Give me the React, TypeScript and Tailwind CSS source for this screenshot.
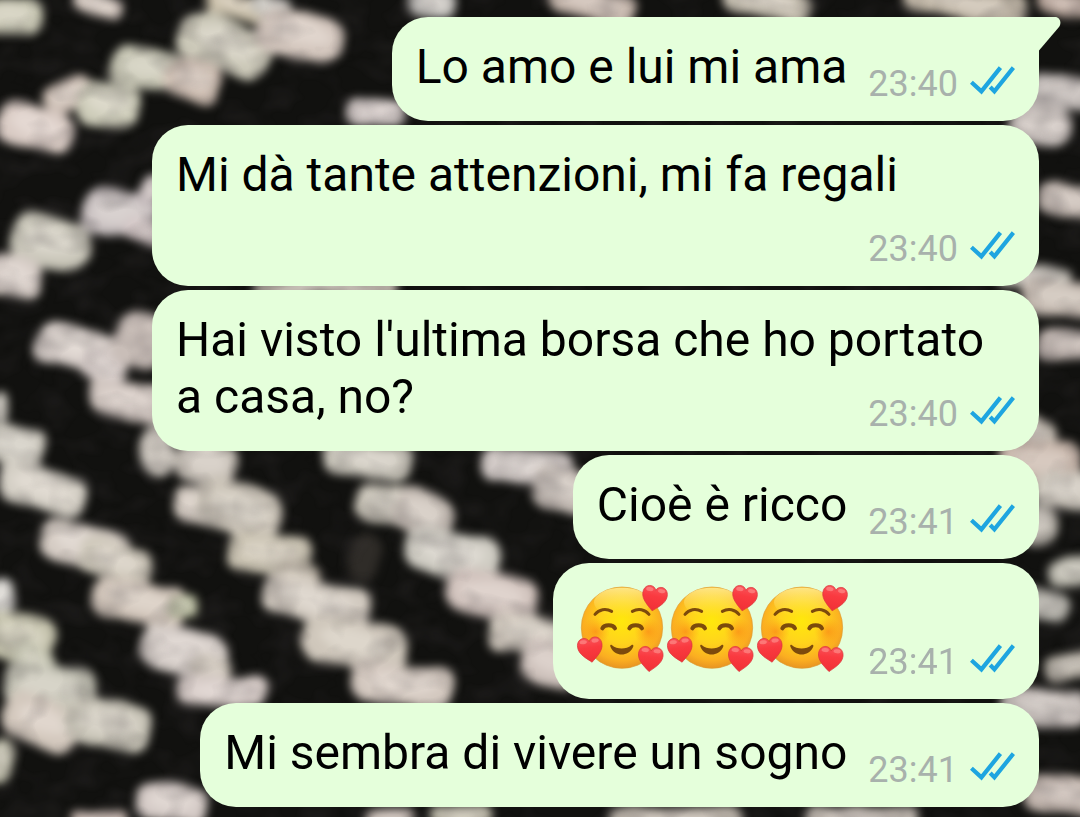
import React from 'react';

interface Message {
  id: number;
  text?: string;
  emojis?: number;
  time: string;
}

const messages: Message[] = [
  { id: 1, text: 'Lo amo e lui mi ama', time: '23:40' },
  { id: 2, text: 'Mi dà tante attenzioni, mi fa regali', time: '23:40' },
  { id: 3, text: "Hai visto l'ultima borsa che ho portato a casa, no?", time: '23:40' },
  { id: 4, text: 'Cioè è ricco', time: '23:41' },
  { id: 5, emojis: 3, time: '23:41' },
  { id: 6, text: 'Mi sembra di vivere un sogno', time: '23:41' },
];

// Light tufts of the woven wallpaper: cx, cy, rx, ry, rotation, color
type Tuft = [number, number, number, number, number, string];

const tufts: Tuft[] = [
  [12, 16, 30, 18, 0, '#c9c8b4'],
  [97, 5, 24, 12, 15, '#d0c4bc'],
  [235, 6, 30, 13, 15, '#c9bfa9'],
  [270, 6, 20, 13, 20, '#c5c2bc'],
  [225, 46, 46, 25, 24, '#cbc8b8'],
  [299, 35, 44, 22, 10, '#d3c6bd'],
  [148, 69, 38, 21, 5, '#c8c7b5'],
  [193, 80, 26, 20, 22, '#cfbfb3'],
  [68, 94, 26, 14, -28, '#cbbdb3'],
  [108, 104, 30, 21, 8, '#cdccb9'],
  [35, 128, 38, 21, 10, '#d9cbc4'],
  [376, 113, 30, 13, 5, '#d4cbc9'],
  [120, 214, 40, 22, 8, '#c8c0c0'],
  [150, 190, 12, 16, 20, '#c4babb'],
  [146, 232, 20, 12, 15, '#d1c4c4'],
  [50, 243, 41, 24, 8, '#c9c6b9'],
  [14, 276, 28, 21, 8, '#d5cbc5'],
  [76, 348, 40, 19, 14, '#d9d0cb'],
  [105, 366, 24, 15, 22, '#d0c6c3'],
  [140, 340, 28, 26, 20, '#c9beb8'],
  [128, 400, 40, 20, 12, '#d1c6c0'],
  [0, 408, 8, 18, 0, '#c3c0b7'],
  [14, 446, 30, 19, 14, '#cbc7bd'],
  [44, 488, 46, 22, 18, '#d4cfc5'],
  [158, 452, 16, 26, -10, '#cac4bc'],
  [206, 462, 30, 24, 20, '#c9c2b9'],
  [198, 506, 24, 18, 5, '#d1c8bf'],
  [238, 509, 42, 24, 22, '#cbc4b8'],
  [85, 546, 44, 20, 12, '#d5ccc4'],
  [115, 560, 36, 18, 18, '#cec8ba'],
  [138, 602, 46, 21, 10, '#d0c4b9'],
  [182, 606, 15, 10, 0, '#b9bd9f'],
  [0, 596, 14, 17, 0, '#d5d3cf'],
  [183, 650, 42, 24, 10, '#d4ccc7'],
  [210, 668, 18, 12, 20, '#c7bfb4'],
  [222, 691, 44, 16, 2, '#d6cbc7'],
  [18, 638, 36, 24, 15, '#c5c3ad'],
  [36, 660, 22, 14, 40, '#c4c4b1'],
  [50, 688, 46, 23, 8, '#c6c5b7'],
  [42, 722, 40, 24, 24, '#d3c8bd'],
  [108, 724, 44, 23, 14, '#c9c5b8'],
  [0, 760, 14, 22, 10, '#c2c0ad'],
  [172, 804, 36, 19, 8, '#d3c9c5'],
  [100, 820, 28, 11, 0, '#c4b4ad'],
  [368, 459, 46, 18, 8, '#ccc8bd'],
  [387, 503, 32, 18, 4, '#c9c4b8'],
  [424, 513, 31, 21, 26, '#c9c0b8'],
  [365, 556, 16, 26, 20, '#2f2c28'],
  [270, 554, 42, 20, 6, '#cac3b2'],
  [300, 576, 22, 14, 20, '#c2b9aa'],
  [316, 601, 54, 21, 12, '#d2cac0'],
  [354, 644, 52, 24, 12, '#cfc7bb'],
  [402, 684, 50, 21, 8, '#d3c8bf'],
  [452, 554, 48, 23, 10, '#cfccc3'],
  [492, 595, 47, 22, 14, '#d1c3bd'],
  [534, 636, 46, 19, 6, '#d2cabf'],
  [550, 664, 30, 24, 10, '#cdc1bb'],
  [528, 466, 46, 17, 4, '#cfc7c4'],
  [562, 490, 30, 22, 14, '#c9c0b9'],
  [325, 288, 72, 10, 0, '#b8b0a6'],
  [432, 3, 24, 13, 5, '#c4c2be'],
  [592, 4, 44, 16, 14, '#c6b7ad'],
  [768, 4, 44, 16, 12, '#c8c1b2'],
  [964, 2, 62, 16, 10, '#c3b9a9'],
  [1064, 3, 28, 12, 8, '#baa79c'],
  [1062, 92, 34, 17, 5, '#bfb8b5'],
  [1040, 124, 30, 20, 10, '#cac2be'],
  [1068, 199, 30, 16, 3, '#c4b9b2'],
  [1034, 277, 36, 12, 5, '#bfbbb3'],
  [1060, 298, 40, 17, 5, '#c5bab1'],
  [1068, 345, 30, 15, 5, '#bdb2ad'],
  [1030, 436, 28, 19, 20, '#c0b8ae'],
  [1040, 462, 42, 22, 8, '#c6b5aa'],
  [1066, 490, 34, 17, 5, '#c9c3b9'],
  [1038, 524, 20, 20, 0, '#b9b4ab'],
  [1072, 572, 24, 13, -8, '#b8b6ab'],
  [1046, 606, 24, 15, 10, '#b7b5ad'],
  [1072, 666, 28, 13, -12, '#b2aca2'],
  [1044, 708, 44, 18, 5, '#c8c0bc'],
  [1064, 795, 40, 19, 6, '#c5b8b0'],
  [390, 820, 26, 11, 0, '#c0b5ae'],
  [462, 816, 30, 11, 0, '#c3bfae'],
  [676, 820, 66, 14, 0, '#bdb5ab'],
  [862, 820, 54, 13, 0, '#bcb4ac'],
];

const Wallpaper: React.FC = () => (
  <svg
    className="absolute inset-0 -z-10 h-full w-full"
    viewBox="0 0 1080 817"
    preserveAspectRatio="xMidYMid slice"
    aria-hidden="true"
  >
    <defs>
      <filter
        id="weave"
        x="-40"
        y="-40"
        width="1160"
        height="897"
        filterUnits="userSpaceOnUse"
        colorInterpolationFilters="sRGB"
      >
        <feTurbulence type="fractalNoise" baseFrequency="0.02" numOctaves="2" seed="4" result="noise" />
        <feDisplacementMap in="SourceGraphic" in2="noise" scale="12" xChannelSelector="R" yChannelSelector="G" />
        <feGaussianBlur stdDeviation="4.6" />
      </filter>
      <filter
        id="grain"
        x="0"
        y="0"
        width="1080"
        height="817"
        filterUnits="userSpaceOnUse"
        colorInterpolationFilters="sRGB"
      >
        <feTurbulence type="fractalNoise" baseFrequency="0.03 0.04" numOctaves="2" seed="9" />
        <feColorMatrix values="0 0 0 0 0.25  0 0 0 0 0.23  0 0 0 0 0.24  2.4 0 0 0 -1" />
      </filter>
    </defs>
    <rect width="1080" height="817" fill="#11110f" />
    <g filter="url(#weave)">
      {tufts.map(([cx, cy, rx, ry, rot, fill], index) => (
        <g key={index} transform={`rotate(${rot} ${cx} ${cy})`}>
          <rect x={cx - rx} y={cy - ry} width={rx * 2} height={ry * 2} rx={ry * 0.75} fill={fill} />
          <ellipse cx={cx} cy={cy - ry * 0.1} rx={rx * 0.7} ry={ry * 0.55} fill="#fffaf2" opacity={ry > 25 ? 0 : 0.3} />
        </g>
      ))}
    </g>
    <rect width="1080" height="817" filter="url(#grain)" opacity="0.22" />
  </svg>
);

const DoubleCheck: React.FC = () => (
  <svg className="mb-2 h-[29px] w-[45px]" viewBox="0 0 45 29" fill="none" role="img" aria-label="Letto">
    <g stroke="#1ea5e0" strokeWidth="4.2" strokeLinejoin="miter">
      <path d="M1.4 16.2 11.4 25.4 30.4 1.6" />
      <path d="M20.2 21 24.4 25.4 43.4 1.6" />
    </g>
  </svg>
);

const Heart: React.FC<{ x: number; y: number; rotate: number }> = ({ x, y, rotate }) => (
  <g transform={`translate(${x} ${y}) rotate(${rotate})`}>
    <path
      d="M0 38C-12 27-37 10-37-12C-37-28-27-36-17-36C-8-36-2-31 0-24C2-31 8-36 17-36C27-36 37-28 37-12C37 10 12 27 0 38Z"
      fill="url(#heart)"
      stroke="#d9343a"
      strokeWidth="2"
    />
    <ellipse cx="-18" cy="-25" rx="11" ry="6" fill="#ff9c98" opacity="0.55" />
    <ellipse cx="18" cy="-25" rx="11" ry="6" fill="#ff9c98" opacity="0.55" />
  </g>
);

const LoveFace: React.FC = () => (
  <svg className="size-[90px] overflow-visible" viewBox="0 0 270 270" role="img" aria-label="🥰">
    <defs>
      <radialGradient id="face" cx="0.5" cy="0.42" r="0.6">
        <stop offset="0" stopColor="#ffe80c" />
        <stop offset="0.45" stopColor="#ffd41c" />
        <stop offset="0.8" stopColor="#fbae21" />
        <stop offset="1" stopColor="#e48f22" />
      </radialGradient>
      <linearGradient id="shine" x1="0" y1="0" x2="0" y2="1">
        <stop offset="0" stopColor="#fff4a8" stopOpacity="0.75" />
        <stop offset="1" stopColor="#ffe95c" stopOpacity="0" />
      </linearGradient>
      <radialGradient id="blush">
        <stop offset="0" stopColor="#fb8a16" stopOpacity="0.7" />
        <stop offset="1" stopColor="#fb9a16" stopOpacity="0" />
      </radialGradient>
      <linearGradient id="heart" x1="0" y1="0" x2="0" y2="1">
        <stop offset="0" stopColor="#f9545a" />
        <stop offset="0.4" stopColor="#fa3a40" />
        <stop offset="1" stopColor="#f03036" />
      </linearGradient>
    </defs>
    <circle cx="135" cy="128" r="122" fill="url(#face)" stroke="#dc9a30" strokeWidth="2" />
    <ellipse cx="135" cy="52" rx="84" ry="44" fill="url(#shine)" />
    <circle cx="56" cy="140" r="42" fill="url(#blush)" />
    <circle cx="214" cy="140" r="42" fill="url(#blush)" />
    <g fill="none" stroke="#7c4a0c" strokeLinecap="round">
      <path d="M54 88C66 73 86 69 104 79" strokeWidth="9" />
      <path d="M166 79C184 69 204 73 216 88" strokeWidth="9" />
      <path d="M76 130C82 118 108 118 114 130" strokeWidth="12" />
      <path d="M157 130C163 118 189 118 195 130" strokeWidth="12" />
    </g>
    <path
      d="M105 181C120 194 148 194 163 181C168 177 171 182 168 187C154 216 114 216 101 187C98 182 100 177 105 181Z"
      fill="#7c4a0c"
    />
    <Heart x={232} y={40} rotate={10} />
    <Heart x={40} y={194} rotate={-8} />
    <Heart x={220} y={222} rotate={6} />
  </svg>
);

const Meta: React.FC<{ time: string }> = ({ time }) => (
  <span className="float-right mt-[18px] -mb-[18px] ml-[21px] flex h-[57px] items-center gap-3">
    <time className="text-4xl leading-[57px] text-[#a8b1ac]">{time}</time>
    <DoubleCheck />
  </span>
);

const Bubble: React.FC<{ message: Message; tail: boolean }> = ({ message, tail }) => (
  <li
    className={`relative max-w-full bg-[#e5ffdb] px-6 pt-[21px] pb-[26px] text-5xl leading-[57px] text-black ${
      tail ? 'rounded-[36px] rounded-tr-none' : 'rounded-[36px]'
    }`}
  >
    {message.emojis ? (
      <div className="flex items-end">
        <div className="flex h-[89px] pt-px">
          {Array.from({ length: message.emojis }, (_, i) => (
            <LoveFace key={i} />
          ))}
        </div>
        <Meta time={message.time} />
      </div>
    ) : (
      <p>
        {message.text}
        <Meta time={message.time} />
      </p>
    )}
    {tail && (
      <svg className="absolute top-0 left-full h-[34px] w-[22px]" viewBox="0 0 22 34" aria-hidden="true">
        <path d="M-1 0H16C21 0 23 6 20 10L0 33.5H-1Z" fill="#e5ffdb" />
      </svg>
    )}
  </li>
);

export default function App() {
  return (
    <main className="relative isolate min-h-screen overflow-hidden font-[Roboto,sans-serif]">
      <Wallpaper />
      <ul className="flex flex-col items-end gap-1 pt-[17px] pr-[41px] pb-[10px] pl-38">
        {messages.map((message, index) => (
          <Bubble key={message.id} message={message} tail={index === 0} />
        ))}
      </ul>
    </main>
  );
}
